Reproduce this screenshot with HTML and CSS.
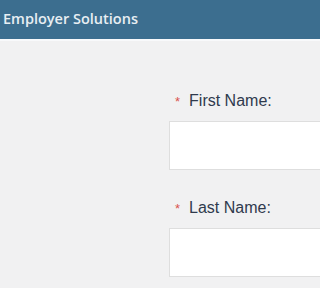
FILE: index.html
```html
<!DOCTYPE html>
<html>
<head>
<meta charset="utf-8">
<link rel="stylesheet" href="styles.css">
</head>
<body>
<header class="topbar"><span class="brand">Employer Solutions</span></header>
<main class="content">
  <div class="field">
    <label class="label"><span class="req">*</span>First Name:</label>
    <div class="input"></div>
  </div>
  <div class="field">
    <label class="label"><span class="req">*</span>Last Name:</label>
    <div class="input"></div>
  </div>
</main>
</body>
</html>
```
FILE: styles.css
```css
html, body { margin: 0; padding: 0; overflow: hidden; }
html { background: #f1f1f2; }
body {
  height: 288px;
  background: #f1f1f2;
  font-family: "Liberation Sans", Arial, sans-serif;
}
.topbar {
  height: 41px;
  box-sizing: border-box;
  background: #3c6e8f;
  border-bottom: 2px solid #f8f9fb;
  display: flex;
  align-items: center;
  padding-left: 3px;
}
.brand {
  color: #e8eef3;
  font-family: "Open Sans", sans-serif;
  font-weight: 600;
  font-size: 14.5px;
  margin-top: -2px;
}
.content {
  padding-left: 169px;
  padding-top: 51px;
  display: flex;
  flex-direction: column;
  gap: 29px;
}
.field { display: flex; flex-direction: column; gap: 10px; }
.label {
  font-size: 16px;
  line-height: 18px;
  color: #2f3a4d;
  display: flex;
  align-items: baseline;
}
.req {
  color: #d9534f;
  font-size: 13px;
  margin-left: 6px;
  margin-right: 9px;
}
.input {
  height: 49px;
  box-sizing: border-box;
  background: #fff;
  border: 1px solid #dedede;
  border-right: none;
}
```
